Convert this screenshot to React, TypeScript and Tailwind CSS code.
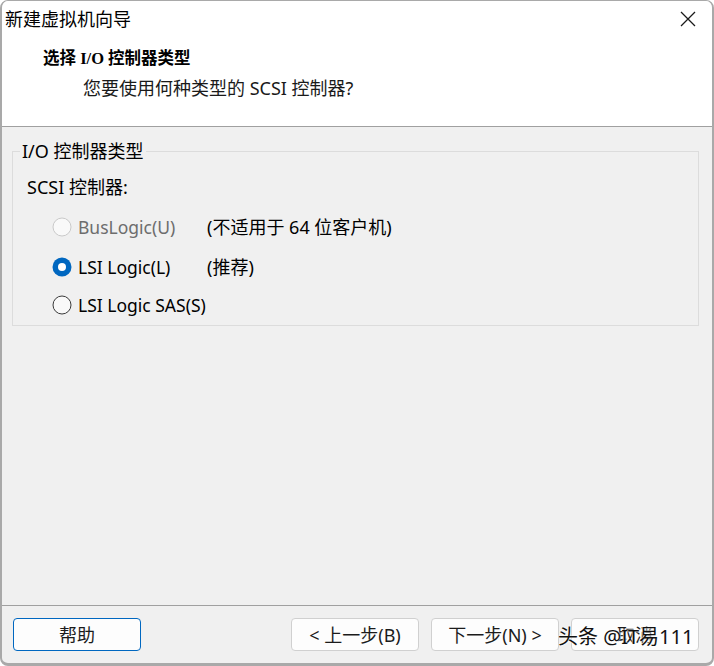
const sans = 'font-["Noto_Sans","Noto_Sans_CJK_SC",sans-serif]'

type Option = {
  label: string
  note?: string
  state: 'disabled' | 'checked' | 'off'
}

const options: Option[] = [
  { label: 'BusLogic(U)', note: '(不适用于 64 位客户机)', state: 'disabled' },
  { label: 'LSI Logic(L)', note: '(推荐)', state: 'checked' },
  { label: 'LSI Logic SAS(S)', state: 'off' },
]

const Radio = ({ state }: { state: Option['state'] }) => {
  if (state === 'checked') {
    return (
      <svg width="20" height="20" viewBox="0 0 20 20">
        <circle cx="10" cy="10" r="9.5" fill="#0067c0" />
        <circle cx="10" cy="10" r="4" fill="#ffffff" />
      </svg>
    )
  }
  const stroke = state === 'disabled' ? '#c9c9c9' : '#3a3a3a'
  return (
    <svg width="20" height="20" viewBox="0 0 20 20">
      <circle cx="10" cy="10" r="9" fill="#f9f9f9" stroke={stroke} strokeWidth="1" />
    </svg>
  )
}

const Button = ({ children, primary }: { children: React.ReactNode; primary?: boolean }) => (
  <button
    className={`w-[128px] h-[33px] rounded-[4px] bg-[#fdfdfd] text-[18px] leading-[22px] text-[#1b1b1b] ${
      primary ? 'border border-[#0067c0]' : 'border border-[#d0d0d0]'
    }`}
  >
    {children}
  </button>
)

export default function App() {
  return (
    <div className={`w-[714px] h-[666px] bg-white ${sans}`}>
      <div className="relative h-full flex flex-col overflow-hidden rounded-[8px] border-x-2 border-b-[3px] border-t border-[#a9a9a9] bg-[#f0f0f0]">
        {/* ================= HEADER ================= */}
        <div className="h-[125px] bg-white">
          <div className="h-[35px] flex items-center justify-between pl-[3px] pr-[16px]">
            <span className="text-[18px] leading-[22px] text-black">新建虚拟机向导</span>
            <svg width="16" height="16" viewBox="0 0 16 16">
              <path d="M1 1 L15 15 M15 1 L1 15" stroke="#1a1a1a" strokeWidth="1.3" />
            </svg>
          </div>
          <div className="pl-[41px] pt-[12px] text-[16.5px] leading-[22px] font-bold text-black font-['Liberation_Serif','Noto_Sans_CJK_SC',serif]">
            选择 I/O 控制器类型
          </div>
          <div className="pl-[81px] pt-[7px] text-[18px] leading-[22px] text-[#1a1a1a]">
            您要使用何种类型的 SCSI 控制器?
          </div>
        </div>
        <div className="h-px bg-[#a0a0a0]" />

        {/* ================= BODY ================= */}
        <div className="flex-1 pl-[10px] pr-[13px] pt-[14px]">
          <fieldset className="border border-[#dcdcdc] pb-[10px]">
            <legend className="ml-[7px] px-[2px] text-[18px] leading-[20px] text-black">
              I/O 控制器类型
            </legend>
            <div className="pl-[14px] pt-[16px] text-[18px] leading-[20px] text-black">SCSI 控制器:</div>
            <div className="pl-[39px] flex flex-col">
              {options.map((o, i) => (
                <div
                  key={o.label}
                  className={`flex items-center h-[20px] ${i === 2 ? 'mt-[18px]' : 'mt-[20px]'}`}
                >
                  <div className="w-[155px] flex items-center gap-[6px]">
                    <Radio state={o.state} />
                    <span
                      className={`text-[17.5px] leading-[20px] ${
                        o.state === 'disabled' ? 'text-[#6d6d6d]' : 'text-black'
                      }`}
                    >
                      {o.label}
                    </span>
                  </div>
                  {o.note && <span className="text-[18px] leading-[20px] text-black">{o.note}</span>}
                </div>
              ))}
            </div>
          </fieldset>
        </div>

        {/* ================= FOOTER ================= */}
        <div className="h-px bg-[#a0a0a0]" />
        <div className="h-[57px] flex items-start pt-[12px] pl-[11px] pr-[13px]">
          <Button primary>帮助</Button>
          <div className="ml-auto flex gap-[12px]">
            <Button>&lt; 上一步(B)</Button>
            <Button>下一步(N) &gt;</Button>
            <Button>取消</Button>
          </div>
        </div>

        {/* watermark */}
        <div className="absolute left-[556px] top-[624px] text-[20px] leading-[24px] text-[#111] [text-shadow:0_0_2px_#fff,0_0_2px_#fff]">
          头条 @IT易111
        </div>
      </div>
    </div>
  )
}
